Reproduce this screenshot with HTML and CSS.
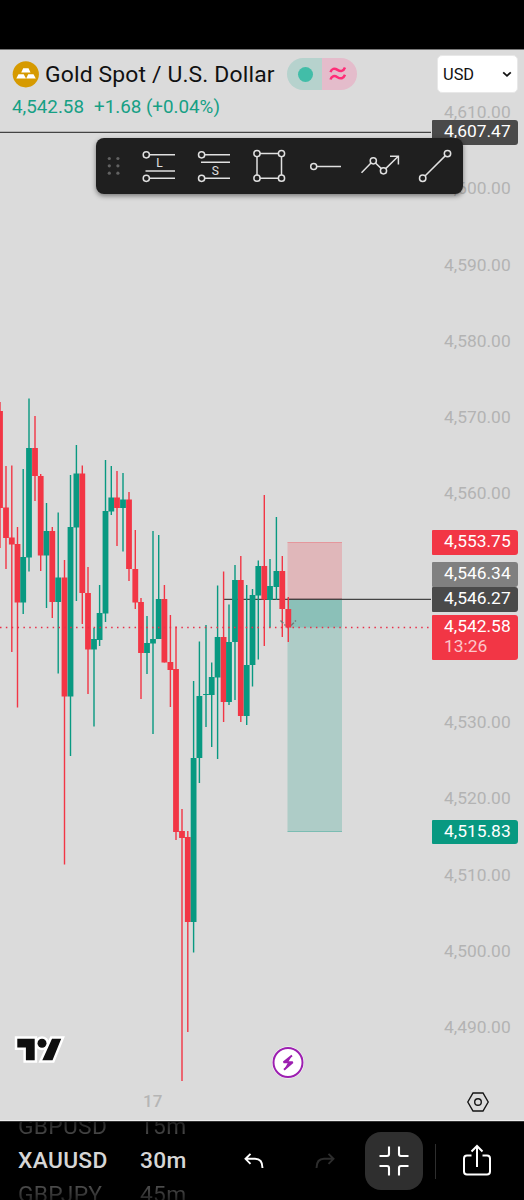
FILE: index.html
```
<!DOCTYPE html>
<html lang="en">
<head>
    <meta charset="utf-8">
    <title>XAUUSD</title>
    <link rel="stylesheet" href="styles.css">
</head>
<body>
<div class="status-bar"></div>
<div class="chart">
    <svg class="plot" id="plot" viewBox="0 50 432 1070" width="432" height="1070">
        <path class="level" d="M0 132.3H431M223 599.3H431"/>
        <g id="candles"></g>
        <rect x="287.5" y="542" width="54.5" height="57" fill="#f23645" fill-opacity=".22"/>
        <path d="M287.5 542.5H342" stroke="#f23645" stroke-opacity=".25"/>
        <rect x="287.5" y="599.5" width="54.5" height="232.5" fill="#089981" fill-opacity=".21"/>
        <rect x="287.5" y="599.5" width="54.5" height="28" fill="#089981" fill-opacity=".21"/>
        <path d="M287.5 831.5H342" stroke="#089981" stroke-opacity=".3"/>
        <path class="level" d="M287 599.3H342"/>
        <g id="last"></g>
        <path d="M280.5 620.5L285.500 625.500M291 625.500L296 620.500" stroke="#777" stroke-width="1.4" stroke-dasharray="4 1.500" fill="none"/>
        <path class="last-price" d="M0 627.5H431"/>
    </svg>
    <div class="price-scale">
        <span>4,610.00</span>
        <span>4,600.00</span>
        <span>4,590.00</span>
        <span>4,580.00</span>
        <span>4,570.00</span>
        <span>4,560.00</span>
        <span></span>
        <span></span>
        <span>4,530.00</span>
        <span>4,520.00</span>
        <span>4,510.00</span>
        <span>4,500.00</span>
        <span>4,490.00</span>
    </div>

    <div class="tag tag-line">4,607.47</div>
    <div class="tag tag-stop">4,553.75</div>
    <div class="tag tag-grey">4,546.34</div>
    <div class="tag tag-entry">4,546.27</div>
    <div class="tag tag-last">4,542.58<br><small>13:26</small></div>
    <div class="tag tag-target">4,515.83</div>

    <div class="legend">
        <div class="title-row">
            <svg width="27" height="27" viewBox="0 0 27 27">
                <circle cx="13.8" cy="13.3" r="13.1" fill="#d69a00"/>
                <path fill="#fff" d="M11.2 7.2h5.3l2 4.3H9.200zM6.500 13.300h5.200l2.300 4.300H4.300zM16.200 13.300H21.500l2.300 4.300h-9.600z"/>
            </svg>
            <h1>Gold Spot / U.S. Dollar</h1>
            <div class="pill">
                <span class="pill-open"><i></i></span>
                <span class="pill-approx">
                    <svg width="18" height="16" viewBox="0 0 18 16" fill="none" stroke="#ff2e78" stroke-width="2.5">
                        <path d="M1.500 6.200C2.600 2.400 5.500 2 8.500 3.900S14.500 5.400 16 1.500M1.500 13.500C2.600 9.700 5.500 9.300 8.500 11.200S14.500 12.700 16 8.800"/>
                    </svg>
                </span>
            </div>
        </div>
        <div class="quote"><span>4,542.58</span><span>+1.68 (+0.04%)</span></div>
    </div>

    <button class="currency">USD
        <svg width="10" height="7" viewBox="0 0 10 7" fill="none" stroke="#111" stroke-width="1.8"><path d="M1.200 1.300L5 4.800L8.800 1.300"/></svg>
    </button>

    <div class="toolbar">
        <svg width="367" height="56" viewBox="96 138 367 56" fill="none" stroke="#e0e0e0" stroke-width="1.5">
            <g fill="#626262" stroke="none">
                <circle cx="109.300" cy="158.500" r="1.600"/><circle cx="117.900" cy="158.500" r="1.600"/>
                <circle cx="109.300" cy="165.800" r="1.600"/><circle cx="117.900" cy="165.800" r="1.600"/>
                <circle cx="109.300" cy="173.200" r="1.600"/><circle cx="117.900" cy="173.200" r="1.600"/>
            </g>
            <!-- long position -->
            <circle cx="146.300" cy="154.800" r="3.100"/><circle cx="146.300" cy="178.300" r="3.100"/>
            <path d="M149.500 154.800H175M145.500 171H175M149.500 178.300H175"/>
            <text x="156.300" y="167.300">L</text>
            <!-- short position -->
            <circle cx="201.600" cy="154.800" r="3.100"/><circle cx="201.600" cy="178.300" r="3.100"/>
            <path d="M204.800 154.800H230M201 162.200H230M204.800 178.300H230"/>
            <text x="211.700" y="174.500">S</text>
            <!-- rectangle -->
            <circle cx="257" cy="153.600" r="3.100"/><circle cx="281.500" cy="153.600" r="3.100"/>
            <circle cx="257" cy="178.200" r="3.100"/><circle cx="281.500" cy="178.200" r="3.100"/>
            <path d="M260 153.600H278.500M260 178.200H278.500M257 156.700V175.100M281.500 156.700V175.100"/>
            <!-- horizontal ray -->
            <circle cx="313.700" cy="166.500" r="3"/><path d="M316.700 166.500H341"/>
            <!-- polyline arrow -->
            <circle cx="373.300" cy="160.800" r="3.100"/><circle cx="383.500" cy="170.800" r="3.100"/>
            <path d="M361.500 172.800L371 163M375.500 163L381.300 168.600M385.700 168.600L398 156.500M390 156.200H398.400V164.500"/>
            <!-- trend line -->
            <circle cx="422.700" cy="178.300" r="3.200"/><circle cx="447.500" cy="153.600" r="3.200"/>
            <path d="M425 176L445.200 155.900"/>
        </svg>
    </div>

    <svg class="tv-logo" width="54" height="32" viewBox="14 1034 54 32">
        <g fill="#0f0f0f" stroke="#fff" stroke-width="5">
            <path d="M17.300 1038.800H34.700V1060.300H25.900V1047.400H17.300zM52 1038.800H61.200L52.500 1060.300H42.300z"/>
            <circle cx="42" cy="1043.200" r="4.500"/>
        </g>
        <path fill="#0f0f0f" d="M17.300 1038.800H34.700V1060.300H25.900V1047.400H17.300zM52 1038.800H61.200L52.500 1060.300H42.300z"/>
        <circle cx="42" cy="1043.200" r="4.500" fill="#0f0f0f"/>
    </svg>

    <svg class="bolt" width="34" height="34" viewBox="0 0 34 34">
        <circle cx="17" cy="16.500" r="16" fill="#fff"/>
        <circle cx="17" cy="16.500" r="14.500" fill="none" stroke="#9c1fb0" stroke-width="2"/>
        <path d="M21 9.500L12.600 16.200H21.700L13 23.700" fill="none" stroke="#9c1fb0" stroke-width="2" stroke-linejoin="bevel"/>
        <path d="M21 9.500L12.300 16.500H17zM13 23.700L21.700 16.500H17z" fill="#9c1fb0"/>
    </svg>

    <span class="date">17</span>
    <svg class="settings" width="22" height="20" viewBox="0 0 22 20" fill="none" stroke="#151515" stroke-width="1.400">
        <path d="M6 1H16L21.200 10L16 19H6L.8 10z"/><circle cx="11" cy="10" r="3.300"/>
    </svg>
</div>

<div class="bottom-bar">
    <div class="wheel symbols"><span class="prev">GBPUSD</span><b>XAUUSD</b><span class="next">GBPJPY</span></div>
    <div class="wheel intervals"><span class="prev">15m</span><b>30m</b><span class="next">45m</span></div>
    <svg class="undo" width="20" height="16" viewBox="0 0 20 16" fill="none" stroke="#fff" stroke-width="1.900">
        <path d="M6.500 .8L1.500 5.800L6.500 10.800M1.500 5.800H11C15.500 5.800 18.500 8.800 18.500 15"/>
    </svg>
    <svg class="redo" width="20" height="16" viewBox="0 0 20 16" fill="none" stroke="#2d2d2d" stroke-width="1.900">
        <path d="M13.500 .8L18.500 5.800L13.500 10.800M18.500 5.800H9C4.500 5.800 1.500 8.800 1.500 15"/>
    </svg>
    <div class="shrink">
        <svg width="30" height="30" viewBox="0 0 30 30" fill="none" stroke="#fff" stroke-width="2.100">
            <path d="M.5 10H8Q10 10 10 8V.5M20 .5V8Q20 10 22 10H29.500M.5 20H8Q10 20 10 22V29.500M20 29.500V22Q20 20 22 20H29.500"/>
        </svg>
    </div>
    <div class="divider"></div>
    <svg class="share" width="30" height="32" viewBox="0 0 30 32" fill="none" stroke="#fff" stroke-width="2">
        <path d="M9.500 11.500H5Q2 11.500 2 14.500V27.500Q2 30.500 5 30.500H25Q28 30.500 28 27.500V14.500Q28 11.500 25 11.500H20.500M15 23V2M9.500 7.500L15 2L20.500 7.500"/>
    </svg>
</div>
<script src="chart.js"></script>
</body>
</html>
```
FILE: styles.css
```
body {
    margin: 0;
    width: 524px;
    height: 1200px;
    overflow: hidden;
    background-color: #000;
    font-family: Roboto, sans-serif;
}
.status-bar {
    box-sizing: border-box;
    height: 50px;
    border-bottom: 1px solid #777;
}
.chart {
    position: relative;
    display: flex;
    height: 1070px;
    background-color: #dbdbdb;
    border-bottom: 1px solid #eee;
}
.plot {
    display: block;
    flex: none;
}
.level {
    stroke: #434343;
    stroke-width: 1.3;
    fill: none;
}
.last-price {
    stroke: #e8304a;
    stroke-width: 1.4;
    stroke-dasharray: 1.5 4.35;
}
.price-scale {
    box-sizing: border-box;
    width: 92px;
    height: 1070px;
    padding-top: 24px;
    overflow: hidden;
    color: #b3b3b3;
}
.price-scale span {
    display: block;
    height: 76.25px;
    line-height: 76px;
    margin-left: 12px;
    font-size: 17.4px;
}
/* Price tags over the scale */
.tag {
    position: absolute;
    left: 432px;
    width: 86px;
    height: 25px;
    line-height: 24px;
    padding-left: 12px;
    box-sizing: border-box;
    border-radius: 1px 3px 3px 1px;
    color: #fff;
    font-size: 17.4px;
}
.tag-line {
    top: 70px;
    line-height: 22px;
    background-color: #4a4a4a;
}
.tag-stop {
    top: 480px;
    line-height: 23px;
    background-color: #f23645;
}
.tag-grey {
    top: 512px;
    line-height: 23px;
    background-color: #808080;
}
.tag-entry {
    top: 537px;
    line-height: 22px;
    background-color: #4a4a4a;
}
.tag-last {
    top: 565px;
    height: 45px;
    line-height: 20px;
    padding-top: 1px;
    background-color: #f23645;
}
.tag-last small {
    font-size: 17.4px;
    color: #fcc6cb;
}
.tag-target {
    top: 770px;
    line-height: 22px;
    height: 24px;
    background-color: #089981;
}
/* Symbol name and quote */
.legend {
    position: absolute;
    left: 12px;
    top: 8px;
}
.title-row {
    display: flex;
    align-items: center;
    height: 32px;
}
.title-row h1 {
    margin: 0 0 0 6px;
    width: 242px;
    font-size: 22.9px;
    font-weight: 400;
    color: #111;
    white-space: nowrap;
    letter-spacing: 0.15px;
}
.pill {
    display: flex;
    width: 70px;
    height: 32px;
    border-radius: 16px;
    overflow: hidden;
}
.pill span {
    display: flex;
    flex: 1;
    align-items: center;
    justify-content: center;
}
.pill-open {
    background-color: #b6d2cd;
}
.pill-open i {
    width: 15px;
    height: 15px;
    border-radius: 50%;
    background-color: #42bda8;
    margin-left: 2px;
}
.pill-approx {
    background-color: #e4bccb;
}
.pill-approx svg {
    margin-right: 3px;
}
.quote {
    display: flex;
    gap: 10px;
    margin-top: 6px;
    font-size: 18.8px;
    line-height: 22px;
    color: #16a085;
}
.currency {
    position: absolute;
    left: 437px;
    top: 5px;
    width: 81px;
    height: 38px;
    display: flex;
    align-items: center;
    justify-content: space-between;
    padding: 0 5px;
    border: 1px solid #e8e8e8;
    border-radius: 5px;
    background-color: #fff;
    font-family: Roboto, sans-serif;
    font-size: 16.4px;
    color: #111;
}
.toolbar {
    position: absolute;
    left: 96px;
    top: 88px;
    width: 367px;
    height: 56px;
    border-radius: 8px;
    background-color: #1f1f1f;
    box-shadow: 0 2px 5px rgba(0, 0, 0, 0.45);
}
.toolbar svg {
    display: block;
}
.toolbar text {
    font-size: 12px;
    fill: #e0e0e0;
    stroke: none;
}
.tv-logo {
    position: absolute;
    left: 14px;
    top: 984px;
}
.bolt {
    position: absolute;
    left: 271px;
    top: 996px;
}
.date {
    position: absolute;
    left: 143px;
    top: 1041px;
    font-size: 17px;
    line-height: 21px;
    font-weight: 500;
    color: #b5b5b5;
}
.settings {
    position: absolute;
    left: 467px;
    top: 1042px;
}
/* Bottom bar */
.bottom-bar {
    display: flex;
    align-items: center;
    height: 78px;
    border-top: 1px solid #333;
    overflow: hidden;
}
.wheel {
    flex: none;
    font-size: 22.8px;
    line-height: 34px;
    letter-spacing: 0.3px;
}
.wheel span,
.wheel b {
    display: block;
}
.wheel b {
    font-weight: 500;
    color: #d6d6d6;
}
/* neighbours fade out towards the edges of the wheel */
.prev,
.next {
    color: transparent;
    background-clip: text;
    -webkit-background-clip: text;
}
.prev {
    background-image: linear-gradient(#1c1c1c 30%, #505050 80%);
}
.next {
    background-image: linear-gradient(#505050 20%, #1c1c1c 75%);
}
.symbols {
    margin-left: 18px;
    width: 122px;
}
.intervals {
    width: 104px;
}
.undo {
    margin-right: 51px;
}
.redo {
    margin-right: 30px;
}
.shrink {
    display: flex;
    align-items: center;
    justify-content: center;
    width: 58px;
    height: 58px;
    border-radius: 16px;
    background-color: #2f2f2f;
}
.divider {
    width: 1px;
    height: 35px;
    margin: 0 26px 0 12px;
    background-color: #2e2e2e;
}
.share {
    margin-top: -3px;
}
```
FILE: chart.js
```
// x, high, body top, body bottom, low, up
var candles = [
    [0, 402, 411, 508, 548, 0],
    [6, 466, 507.5, 538, 569, 0],
    [11.8, 465.5, 537.5, 544.5, 652, 0],
    [17.5, 527, 544, 602.5, 707.5, 0],
    [23.2, 469, 557, 602.5, 614, 1],
    [29, 398.5, 448, 557.5, 571.5, 1],
    [35, 416, 448, 476, 501, 0],
    [40.7, 474, 476, 555.5, 571, 0],
    [46.5, 503, 531, 555.5, 608, 1],
    [52.3, 527, 531, 602, 618, 0],
    [58.2, 512.5, 577.5, 602, 673.5, 1],
    [64.5, 560, 577.5, 696.5, 864.5, 0],
    [70.5, 475, 527, 696.5, 756, 1],
    [76.4, 445, 473.5, 527.5, 601, 1],
    [82.3, 465.5, 473.5, 593, 624, 0],
    [88, 567, 593, 649.5, 694, 0],
    [94, 628, 639, 649.5, 726.5, 1],
    [99.6, 585, 613, 640, 646, 1],
    [105.5, 460, 511, 613.5, 622, 1],
    [111.3, 466, 497.5, 511.5, 515, 1],
    [117, 471, 497.5, 508, 546, 0],
    [123, 473, 499.5, 508, 551.5, 1],
    [129, 492, 499.5, 569, 581, 0],
    [135.3, 530, 569, 602.5, 609, 0],
    [141, 598, 602, 653, 699, 0],
    [147, 616, 643, 653, 674, 1],
    [153, 531, 639, 643.5, 734, 1],
    [158.7, 535, 599, 639, 639, 1],
    [164.4, 585, 599, 662.5, 662.5, 0],
    [170.4, 615, 662, 670, 707, 0],
    [176, 626.5, 669, 832, 840, 0],
    [182, 809, 831, 838, 1081, 0],
    [187.8, 831, 837, 922, 1032, 0],
    [193.6, 681, 758, 922, 952.5, 1],
    [199.4, 641.5, 696, 758, 783, 1],
    [206, 625, 694, 695, 727, 1],
    [211.7, 662.5, 677, 695, 747, 1],
    [217.6, 585.5, 637, 677.5, 759, 1],
    [223.6, 571.5, 637, 702, 722, 0],
    [229, 604.5, 642, 702, 705, 1],
    [235, 565, 580, 642, 700, 1],
    [240.8, 556, 580, 716, 722, 0],
    [246.7, 585, 665, 716, 725, 1],
    [252.5, 589, 595, 665, 686.5, 1],
    [258.3, 560.5, 566, 595.5, 659.5, 1],
    [264.3, 495, 566, 599.5, 646, 0],
    [270, 559, 586, 600, 627.5, 1],
    [276.4, 517, 571, 587, 600, 1],
    [282.3, 556, 571, 609, 637, 0],
    [288.3, 597, 609, 627.5, 642, 0]
];

function rect(parent, x, y, w, h, fill) {
    var el = document.createElementNS('http://www.w3.org/2000/svg', 'rect');
    el.setAttribute('x', x);
    el.setAttribute('y', y);
    el.setAttribute('width', w);
    el.setAttribute('height', h);
    el.setAttribute('fill', fill);
    parent.appendChild(el);
}

candles.forEach(function (c, i) {
    // the open candle is drawn above the position box
    var parent = document.getElementById(i == candles.length - 1 ? 'last' : 'candles');
    var color = c[5] ? '#089981' : '#f23645';
    rect(parent, c[0] - 0.7, c[1], 1.4, c[4] - c[1], color);
    rect(parent, c[0] - 2.9, c[2], 5.8, c[3] - c[2], color);
});
```
